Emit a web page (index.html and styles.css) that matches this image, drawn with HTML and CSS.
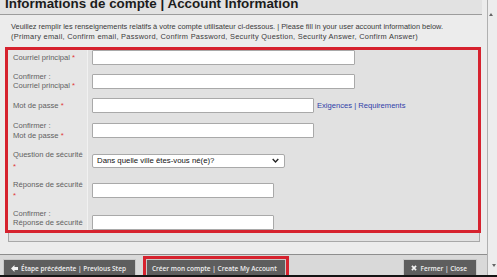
FILE: index.html
```html
<!DOCTYPE html>
<html lang="fr">
<head>
    <meta charset="UTF-8">
    <meta name="viewport" content="width=device-width, initial-scale=1.0">
    <title>Informations de compte | Account Information</title>
    <link rel="stylesheet" href="styles.css">
</head>
<body>
    <div class="window">
        <div class="main">
            <div class="titlebar">
                <h1>Informations de compte | Account Information</h1>
            </div>
            <p class="intro">Veuillez remplir les renseignements relatifs à votre compte utilisateur ci-dessous. | Please fill in your user account information below.<br><span class="fields">(Primary email, Confirm email, Password, Confirm Password, Security Question, Security Answer, Confirm Answer)</span></p>

            <div class="panel">
                <div class="highlight">
                    <div class="form">
                        <label class="label" for="email"><span>Courriel principal <span class="req">*</span></span></label>
                        <div class="field"><input class="text wide" id="email" type="text"></div>

                        <label class="label" for="email2"><span>Confirmer :<br>Courriel principal <span class="req">*</span></span></label>
                        <div class="field"><input class="text wide" id="email2" type="text"></div>

                        <label class="label" for="pass"><span>Mot de passe <span class="req">*</span></span></label>
                        <div class="field"><input class="text mid" id="pass" type="password"><a class="link" href="#">Exigences | Requirements</a></div>

                        <label class="label" for="pass2"><span>Confirmer :<br>Mot de passe <span class="req">*</span></span></label>
                        <div class="field"><input class="text mid" id="pass2" type="password"></div>

                        <label class="label" for="question"><span>Question de sécurité<br><span class="req star">*</span></span></label>
                        <div class="field">
                            <div class="select" id="question">Dans quelle ville êtes-vous né(e)?
                                <svg class="chevron" viewBox="0 0 10 6" width="7" height="5"><path d="M1 1l4 4 4-4" fill="none" stroke="#222" stroke-width="2"/></svg>
                            </div>
                        </div>

                        <label class="label" for="answer"><span>Réponse de sécurité<br><span class="req star">*</span></span></label>
                        <div class="field"><input class="text short" id="answer" type="text"></div>

                        <label class="label last" for="answer2"><span>Confirmer :<br>Réponse de sécurité</span></label>
                        <div class="field last"><input class="text short" id="answer2" type="text"></div>
                    </div>
                </div>
            </div>

            <div class="footer">
                <button class="btn">
                    <svg viewBox="0 0 10 10" width="7" height="7"><path d="M0 5l5-5v3h5v4H5v3z" fill="#f4f4f4"/></svg>
                    Étape précédente | Previous Step
                </button>
                <div class="btn-mark">
                    <button class="btn create">Créer mon compte | Create My Account</button>
                </div>
                <button class="btn close">
                    <svg viewBox="0 0 10 10" width="6" height="6"><path d="M1.5 1.5l7 7M8.5 1.5l-7 7" stroke="#f4f4f4" stroke-width="2.8"/></svg>
                    Fermer | Close
                </button>
            </div>
        </div>
        <div class="scrollbar">
            <span class="arrow up"></span>
            <span class="arrow down"></span>
        </div>
    </div>
    <div class="taskbar"></div>
</body>
</html>
```

FILE: styles.css
```css
body {
    margin: 0;
    width: 497px;
    height: 277px;
    overflow: hidden;
    font-family: "Liberation Sans", Arial, sans-serif;
    background: #e6e6e6;
}
.window {
    display: flex;
    height: 275px;
}
.main {
    flex: 1;
    display: flex;
    flex-direction: column;
    background: #ececec;
}
.titlebar {
    height: 14px;
    background: #e2e2e2;
    border-bottom: 1px solid #9c9c9c;
    margin-right: 5px;
    overflow: hidden;
}
h1 {
    margin: -4px 0 0 5px;
    font-size: 13.4px;
    line-height: 16px;
    color: #1c1c1c;
    white-space: nowrap;
}
.intro {
    margin: 7px 0 0 11px;
    font-size: 7.4px;
    line-height: 10px;
    color: #3a3a3a;
    white-space: nowrap;
}
.fields {
    letter-spacing: 0.28px;
}
.panel {
    margin: 5px 7px 0 8px;
    height: 197px;
    border: 1px solid #a8a8a8;
    border-top: none;
    background: #e2e2e2;
}
.highlight {
    margin: 0 -2px 0 -4px;
    border: 3px solid #d6222e;
    background: #e1e1e1;
}
.form {
    display: grid;
    grid-template-columns: 80px 1fr;
    grid-template-rows: 16px 31px 18px 32px 28px 31px 24px;
}
.label {
    display: flex;
    align-items: center;
    padding-left: 5px;
    font-size: 7.6px;
    line-height: 9.5px;
    color: #5f5f5f;
    background: #e6e6e6;
    border-right: 1px solid #f1f1f1;
}
.req {
    color: #e03a3a;
}
.star {
    display: inline-block;
    margin-top: 2px;
}
.field {
    display: flex;
    align-items: center;
    padding-left: 4px;
}
.last {
    align-items: flex-end;
}
.label.last {
    padding-bottom: 2px;
}
.text {
    box-sizing: border-box;
    height: 15px;
    margin: 0;
    padding: 0 3px;
    border: 1px solid #a9a9a9;
    border-radius: 1px;
    background: #fff;
}
.wide {
    width: 263px;
}
.mid {
    width: 222px;
}
.short {
    width: 182px;
}
.select {
    box-sizing: border-box;
    display: flex;
    align-items: center;
    justify-content: space-between;
    width: 193px;
    height: 14px;
    padding: 0 5px 0 4px;
    border: 1px solid #a9a9a9;
    border-radius: 2px;
    background: #fff;
    font-size: 7.8px;
    color: #111;
}
.link {
    margin-left: 3px;
    font-size: 7.6px;
    color: #3040a8;
    text-decoration: none;
}
.footer {
    flex: 1;
    display: flex;
    align-items: flex-start;
    margin-top: 12px;
    padding: 4px 10px 0 3px;
    border-top: 1px solid #8e8e8e;
    background: #d9d9d9;
}
.btn {
    display: flex;
    align-items: center;
    gap: 3px;
    height: 16px;
    margin: 0;
    padding: 1px 9px 0 7px;
    border: 1px solid #c8c8c8;
    border-bottom: none;
    background: #5e5e5e;
    color: #f0f0f0;
    font-family: "Open Sans", "Liberation Sans", sans-serif;
    font-size: 6.5px;
    font-weight: 600;
    white-space: nowrap;
}
.btn-mark {
    margin: -3px 0 0 7px;
    border: 3px solid #d6222e;
    border-bottom: none;
}
.create {
    padding: 1px 8px 0 5px;
}
.close {
    margin-left: auto;
    padding: 1px 9px 0 7px;
}
.scrollbar {
    position: relative;
    width: 9px;
    border-left: 1px solid #b0b0b0;
    background: #ededed;
}
.arrow {
    position: absolute;
    left: 1px;
    width: 0;
    height: 0;
    border-left: 2px solid transparent;
    border-right: 2px solid transparent;
}
.up {
    top: 13px;
    border-bottom: 3px solid #666;
}
.down {
    bottom: 8px;
    left: 4px;
    border-top: 3px solid #666;
}
.taskbar {
    height: 2px;
    background: #141414;
}
```
